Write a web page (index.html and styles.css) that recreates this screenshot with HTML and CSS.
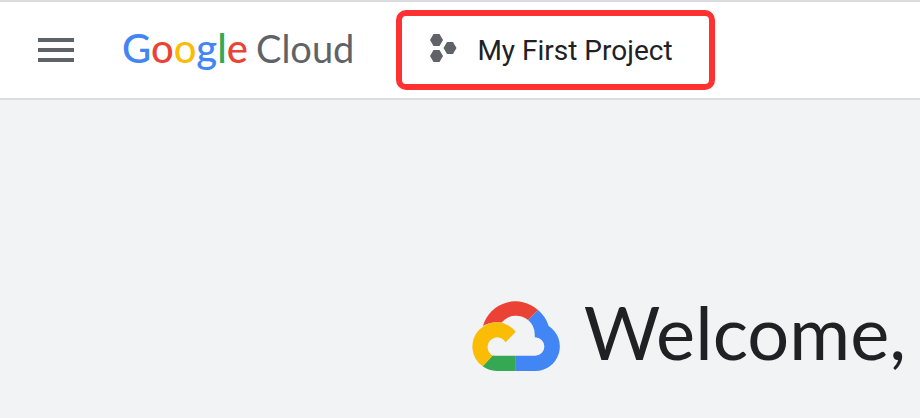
FILE: index.html
```html
<!DOCTYPE html>
<html lang="en">
<head>
    <meta charset="UTF-8">
    <meta name="viewport" content="width=device-width, initial-scale=1.0">
    <title>Google Cloud</title>
    <link rel="stylesheet" href="styles.css">
</head>
<body>
    <header class="topbar">
        <button type="button" class="menu-button" aria-label="Navigation menu">
            <span class="menu-bar"></span>
            <span class="menu-bar"></span>
            <span class="menu-bar"></span>
        </button>

        <a href="#" class="brand"><span class="brand-google"><span class="blue">G</span><span class="red">o</span><span class="yellow">o</span><span class="blue">g</span><span class="green">l</span><span class="red">e</span></span><span class="brand-cloud">Cloud</span></a>

        <button type="button" class="project-picker">
            <svg class="project-icon" viewBox="0 0 27 28" aria-hidden="true">
                <path d="M3.500 0h6L13 6l-3.500 6h-6L0 6z"/>
                <path d="M3.500 16h6l3.500 6-3.500 6h-6L0 22z"/>
                <path d="M17 8h6L26.500 14l-3.500 6h-6L13.500 14z"/>
            </svg>
            <span>My First Project</span>
        </button>
    </header>

    <main class="content">
        <div class="welcome">
            <svg class="cloud-logo" viewBox="37 32 263 211" aria-hidden="true">
                <path fill="#ea4335" d="M69 107A102 102 0 0 1 235 59L205 89A57 57 0 0 0 125 97Q94 93 69 107z"/>
                <path fill="#4285f4" d="M235 59A102 102 0 0 1 267 107A74 74 0 0 1 226 243H168V197H226A28 28 0 0 0 226 141H225V133A57 57 0 0 0 205 89z"/>
                <path fill="#34a853" d="M168 197V243H110Q87 243 68 229L98 196Q103 197 110 197z"/>
                <path fill="#fbbc05" d="M68 229A73 73 0 1 1 168 125L137 156A29 29 0 1 0 98 196z"/>
            </svg>
            <h1>Welcome,</h1>
        </div>
    </main>
</body>
</html>
```

FILE: styles.css
```css
* {
    box-sizing: border-box;
}

body {
    margin: 0;
    min-height: 100vh;
    display: flex;
    flex-direction: column;
    font-family: Roboto, Arial, sans-serif;
    background-color: #f1f3f4;
    color: #202124;
}

.topbar {
    display: flex;
    align-items: center;
    height: 100px;
    padding-left: 38px;
    background-color: #fff;
    border-top: 2px solid #dadce0;
    border-bottom: 2px solid #dadce0;
}

.menu-button {
    display: flex;
    flex-direction: column;
    gap: 6px;
    width: 36px;
    padding: 0;
    border: none;
    background: none;
    cursor: pointer;
}

.menu-bar {
    height: 4px;
    background-color: #5f6368;
}

.brand {
    display: flex;
    align-items: baseline;
    gap: 8px;
    margin-left: 48px;
    padding-bottom: 4px;
    font-family: Lato, sans-serif;
    line-height: 48px;
    text-decoration: none;
}

.brand-google {
    font-size: 40px;
    font-weight: 500;
}

.brand-cloud {
    font-size: 38px;
    color: #5f6368;
}

.blue {
    color: #4285f4;
}

.red {
    color: #ea4335;
}

.yellow {
    color: #fbbc05;
}

.green {
    color: #34a853;
}

.project-picker {
    display: flex;
    align-items: center;
    gap: 20px;
    height: 80px;
    margin-left: 42px;
    padding: 0 36px 0 28px;
    border: 6px solid #ff3131;
    border-radius: 10px;
    background-color: #fff;
    color: #202124;
    font-family: inherit;
    font-size: 28px;
    white-space: nowrap;
    cursor: pointer;
}

.project-icon {
    width: 27px;
    height: 28px;
    margin-bottom: 4px;
    fill: #5f6368;
}

.content {
    flex: 1;
    padding: 186px 14px 32px;
}

.welcome {
    display: flex;
    justify-content: flex-end;
    align-items: center;
    gap: 24px;
}

.cloud-logo {
    width: 88px;
    height: 70px;
}

.welcome h1 {
    margin: 0;
    padding-bottom: 8px;
    font-family: Lato, sans-serif;
    font-size: 74px;
    font-weight: 400;
    line-height: 92px;
}
```
